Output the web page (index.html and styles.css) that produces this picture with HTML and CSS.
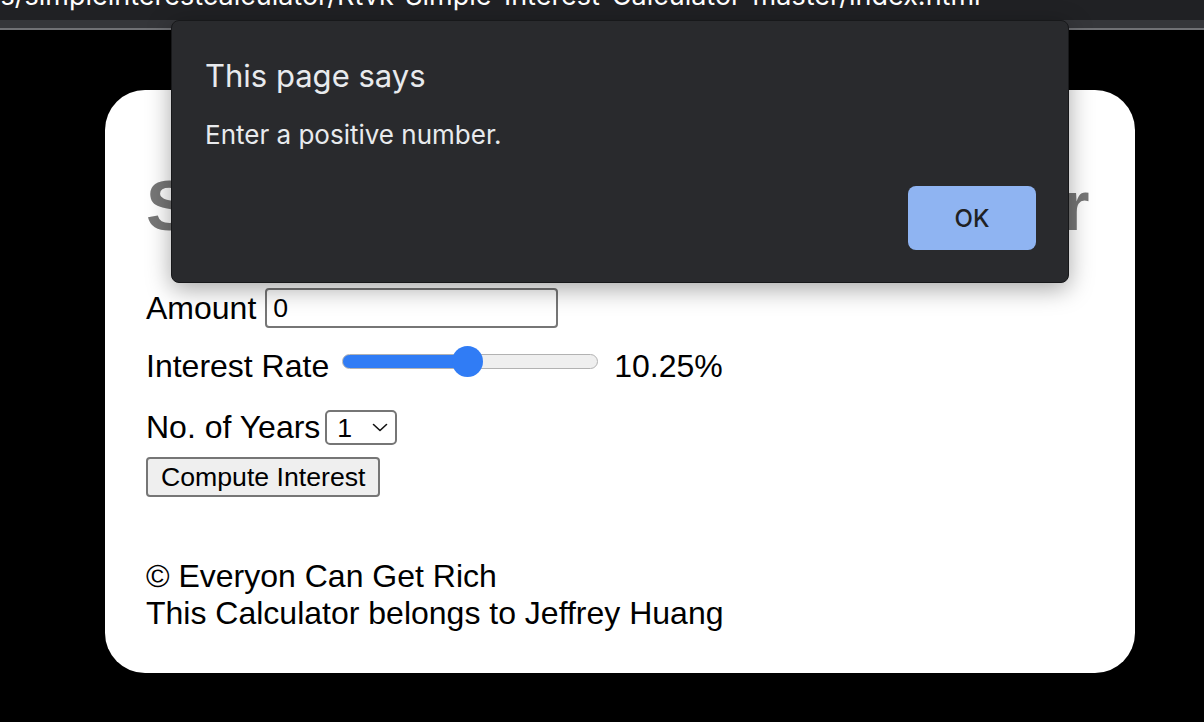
FILE: index.html
```html
<!DOCTYPE html>
<html lang="en">
<head>
<meta charset="utf-8">
<title>Simple Interest Calculator</title>
<link rel="stylesheet" href="styles.css">
</head>
<body>
<div class="toolbar"><div class="url">ls/simpleinterestcalculator/Rtvk-Simple-Interest-Calculator-master/index.html</div></div>
<div class="infobar"></div>

<main class="page">
  <section class="card">
    <h1 class="title">Simple Interest Calculator</h1>
    <form class="form">
      <div class="row row-amount">
        <label class="label" for="amount">Amount</label>
        <input class="amount-input" id="amount" type="number" value="0">
      </div>
      <div class="row row-rate">
        <label class="label" for="rate">Interest Rate</label>
        <input class="rate" id="rate" type="range" min="1" max="20" step="0.25" value="10.25" style="--fill: 48.8%">
        <span class="label rate-value">10.25%</span>
      </div>
      <div class="row row-years">
        <label class="label" for="years">No. of Years</label>
        <span class="select-wrap">
          <select class="years" id="years">
            <option>1</option>
            <option>2</option>
            <option>3</option>
            <option>4</option>
            <option>5</option>
          </select>
          <svg class="chevron" width="16" height="9" viewBox="0 0 16 9" aria-hidden="true"><path d="M1.5 1.5 L8 7.5 L14.5 1.5" fill="none" stroke="#111" stroke-width="1.6" stroke-linecap="round" stroke-linejoin="round"/></svg>
        </span>
      </div>
      <div class="row row-submit">
        <button class="compute" type="button">Compute Interest</button>
      </div>
    </form>
    <footer class="footer">
      <div>© Everyon Can Get Rich</div>
      <div>This Calculator belongs to Jeffrey Huang</div>
    </footer>
  </section>
</main>

<div class="dialog" role="alertdialog">
  <div class="dialog-title">This page says</div>
  <div class="dialog-message">Enter a positive number.</div>
  <div class="dialog-actions">
    <button class="ok" type="button">OK</button>
  </div>
</div>
</body>
</html>
```

FILE: styles.css
```css
* {
  box-sizing: border-box;
}

body {
  margin: 0;
  width: 1204px;
  height: 722px;
  overflow: hidden;
  position: relative;
  background: #000;
  font-family: "Liberation Sans", Arial, sans-serif;
}

.toolbar {
  height: 20px;
  background: #202124;
  overflow: hidden;
}

.url {
  font-family: Inter, "Noto Sans", sans-serif;
  font-size: 27px;
  line-height: 27px;
  color: #fff;
  white-space: nowrap;
  margin-top: -18px;
  margin-left: -6px;
}

.infobar {
  height: 10px;
  background: #35363a;
  border-bottom: 2px solid #707175;
}

.page {
  padding: 60px 0 0 105px;
}

.card {
  width: 1030px;
  height: 583px;
  background: #fff;
  border-radius: 40px;
  padding: 76px 41px 0;
}

.title {
  margin: 0;
  font-size: 70px;
  line-height: 80px;
  font-weight: 700;
  color: #777;
  letter-spacing: 3.2px;
  white-space: nowrap;
}

.form {
  margin: 42px 0 0;
  font-size: 32px;
  line-height: 37px;
  color: #000;
}

.row {
  display: flex;
  align-items: center;
  gap: 9px;
}

.row-amount {
  height: 40px;
}

.amount-input {
  width: 293px;
  height: 40px;
  margin: 0;
  border: 2px solid #767676;
  border-radius: 4px;
  padding: 0 6px;
  font-family: "Liberation Sans", Arial, sans-serif;
  font-size: 26.67px;
  color: #000;
  background: #fff;
  -moz-appearance: textfield;
}

.amount-input::-webkit-inner-spin-button,
.amount-input::-webkit-outer-spin-button {
  -webkit-appearance: none;
  margin: 0;
}

.row-rate {
  margin-top: 17px;
  height: 41px;
  align-items: flex-start;
}

.row-rate .label {
  margin-top: 3px;
}

.rate {
  -webkit-appearance: none;
  appearance: none;
  width: 256px;
  height: 32px;
  margin: 0 0 0 4px;
  padding: 0;
  background: transparent;
}

.rate::-webkit-slider-runnable-track {
  height: 15px;
  border-radius: 8px;
  border: 1px solid #b2b2b2;
  background: linear-gradient(to right, #307cf5 0, #307cf5 var(--fill), #efefef var(--fill), #efefef 100%);
}

.rate::-webkit-slider-thumb {
  -webkit-appearance: none;
  appearance: none;
  width: 31px;
  height: 31px;
  border: none;
  border-radius: 50%;
  background: #307cf5;
  margin-top: -9px;
}

.rate-value {
  margin-left: 7px;
}

.row-years {
  margin-top: 24px;
  height: 35px;
  gap: 5px;
}

.select-wrap {
  position: relative;
  display: inline-flex;
}

.years {
  -webkit-appearance: none;
  appearance: none;
  width: 72px;
  height: 35px;
  margin: 0;
  border: 2px solid #767676;
  border-radius: 5px;
  padding: 0 0 0 10px;
  font-family: "Liberation Sans", Arial, sans-serif;
  font-size: 26.67px;
  color: #000;
  background: #fff;
}

.chevron {
  position: absolute;
  right: 9px;
  top: 13px;
  pointer-events: none;
}

.row-submit {
  margin-top: 12px;
}

.compute {
  height: 40px;
  margin: 0;
  padding: 0 13px;
  border: 2px solid #767676;
  border-radius: 4px;
  background: #efefef;
  font-family: "Liberation Sans", Arial, sans-serif;
  font-size: 26.67px;
  color: #000;
}

.footer {
  margin-top: 61px;
  font-size: 32px;
  line-height: 37px;
  color: #000;
}

.dialog {
  position: absolute;
  left: 171px;
  top: 20px;
  width: 898px;
  height: 263px;
  display: flex;
  flex-direction: column;
  padding: 36px 32px 32px 33px;
  background: #292a2d;
  border: 1px solid #17181a;
  border-radius: 8px;
  box-shadow: 0 6px 24px rgba(0, 0, 0, 0.35);
  font-family: Inter, "Noto Sans", sans-serif;
  color: #e8eaed;
}

.dialog-title {
  font-size: 31px;
  line-height: 38px;
}

.dialog-message {
  margin-top: 24px;
  font-size: 26px;
  line-height: 32px;
}

.dialog-actions {
  margin-top: auto;
  display: flex;
  justify-content: flex-end;
}

.ok {
  width: 128px;
  height: 64px;
  margin: 0;
  border: none;
  border-radius: 8px;
  background: #8fb4f2;
  font-family: Inter, "Noto Sans", sans-serif;
  font-size: 24px;
  font-weight: 500;
  color: #202124;
}
```
